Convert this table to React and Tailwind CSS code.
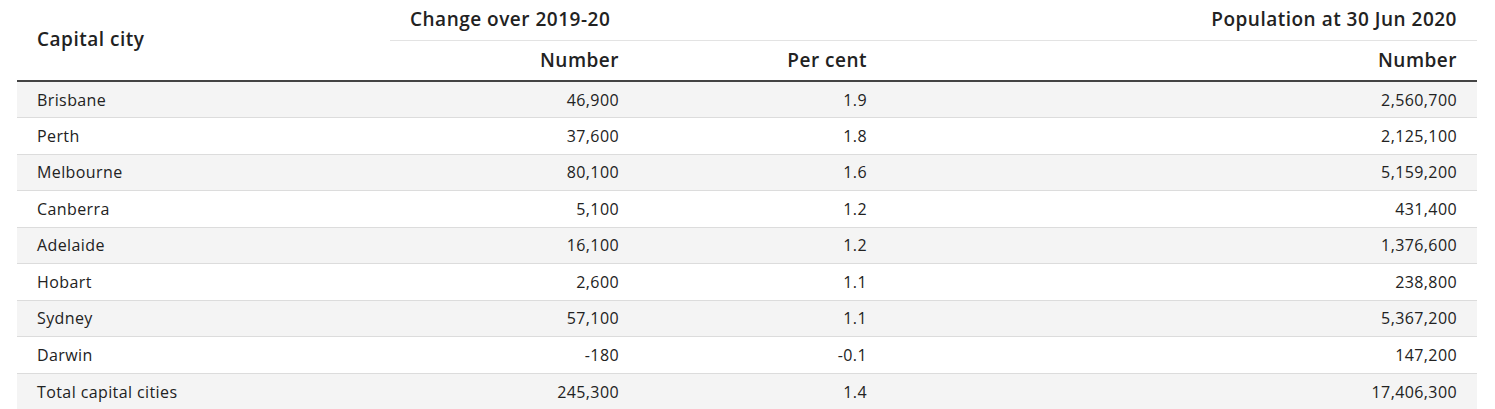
import React from 'react';

const rows = [
    ['Brisbane', '46,900', '1.9', '2,560,700'],
    ['Perth', '37,600', '1.8', '2,125,100'],
    ['Melbourne', '80,100', '1.6', '5,159,200'],
    ['Canberra', '5,100', '1.2', '431,400'],
    ['Adelaide', '16,100', '1.2', '1,376,600'],
    ['Hobart', '2,600', '1.1', '238,800'],
    ['Sydney', '57,100', '1.1', '5,367,200'],
    ['Darwin', '-180', '-0.1', '147,200'],
    ['Total capital cities', '245,300', '1.4', '17,406,300'],
];

const App = () => {
    return (
        <div className="bg-white pl-[17px] pr-[18px] font-['Open_Sans',sans-serif] text-[#222]">
            <table className="w-full border-collapse table-fixed">
                <colgroup>
                    <col className="w-[373px]" />
                    <col className="w-[249px]" />
                    <col className="w-[248px]" />
                    <col />
                </colgroup>
                <thead className="text-[19px] font-semibold tracking-[0.5px]">
                    <tr className="h-[40px]">
                        <th rowSpan={2} className="text-left align-middle px-5 font-semibold pb-[2px]">
                            Capital city
                        </th>
                        <th colSpan={2} className="text-left px-5 font-semibold border-b border-[#e3e3e3] pb-[2px]">
                            Change over 2019-20
                        </th>
                        <th className="text-right px-5 font-semibold border-b border-[#e3e3e3] pb-[2px]">
                            Population at 30 Jun 2020
                        </th>
                    </tr>
                    <tr className="h-[41px] border-b-2 border-[#444]">
                        <th className="text-right px-5 font-semibold">Number</th>
                        <th className="text-right px-5 font-semibold">Per cent</th>
                        <th className="text-right px-5 font-semibold">Number</th>
                    </tr>
                </thead>
                <tbody className="text-[16px] tracking-[0.4px]">
                    {rows.map((row, i) => (
                        <tr
                            key={row[0]}
                            className={`h-[36.5px] ${i % 2 === 0 ? 'bg-[#f4f4f4]' : 'bg-white'} ${i < rows.length - 1 ? 'border-b border-[#dcdcdc]' : ''}`}
                        >
                            <td className="px-5 text-left">{row[0]}</td>
                            <td className="px-5 text-right">{row[1]}</td>
                            <td className="px-5 text-right">{row[2]}</td>
                            <td className="px-5 text-right">{row[3]}</td>
                        </tr>
                    ))}
                </tbody>
            </table>
        </div>
    );
};

export default App;
